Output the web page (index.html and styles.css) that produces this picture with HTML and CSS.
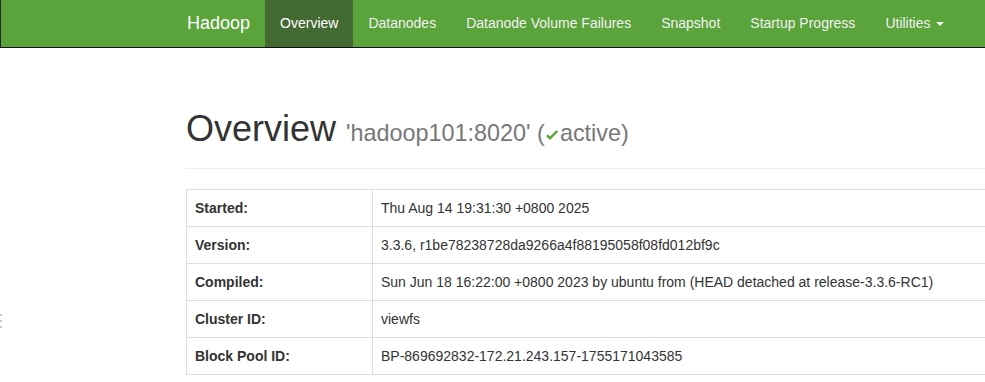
FILE: index.html
```html
<!DOCTYPE html>
<html>
<head>
<meta charset="utf-8">
<title>Namenode information</title>
<link rel="stylesheet" href="styles.css">
</head>
<body>
<header class="navbar">
  <div class="container nav-inner">
    <a class="brand">Hadoop</a>
    <ul class="nav">
      <li class="active"><a>Overview</a></li>
      <li><a>Datanodes</a></li>
      <li><a>Datanode Volume Failures</a></li>
      <li><a>Snapshot</a></li>
      <li><a>Startup Progress</a></li>
      <li><a>Utilities <span class="caret"></span></a></li>
    </ul>
  </div>
</header>
<main class="container main">
  <div class="page-header">
    <h1>Overview <small>'hadoop101:8020' (<svg class="ok" viewBox="0 0 14 12" width="14" height="11"><path d="M0.6 6.6 L4.8 10.8 L13.6 2 L11.7 0.2 L4.8 7.1 L2.5 4.8 Z" fill="#55a235"/></svg>active)</small></h1>
  </div>
  <table class="info">
    <tr><th>Started:</th><td>Thu Aug 14 19:31:30 +0800 2025</td></tr>
    <tr><th>Version:</th><td>3.3.6, r1be78238728da9266a4f88195058f08fd012bf9c</td></tr>
    <tr><th>Compiled:</th><td>Sun Jun 18 16:22:00 +0800 2023 by ubuntu from (HEAD detached at release-3.3.6-RC1)</td></tr>
    <tr><th>Cluster ID:</th><td>viewfs</td></tr>
    <tr><th>Block Pool ID:</th><td>BP-869692832-172.21.243.157-1755171043585</td></tr>
  </table>
</main>
<div class="handle"><i></i><i></i><i></i></div>
</body>
</html>
```
FILE: styles.css
```css
html, body {
  margin: 0;
  padding: 0;
  overflow: hidden;
  background: #fff;
}
body {
  font-family: "Liberation Sans", Arial, Helvetica, sans-serif;
  font-size: 14px;
  line-height: 20px;
  color: #333;
  width: 1512px;
}
.container {
  width: 1140px;
  margin-left: 171px;
  padding: 0 15px;
}
.main {
  padding-top: 19px;
}
.navbar {
  background: #5ba33b;
  border-left: 1px solid #1e2a2a;
  border-bottom: 1px solid #111;
  height: 47px;
}
.nav-inner {
  display: flex;
  height: 47px;
  padding-left: 0;
  margin-left: 171px;
}
.brand {
  font-size: 18px;
  color: #fff;
  line-height: 47px;
  padding: 0 15px;
}
.nav {
  display: flex;
  list-style: none;
  margin: 0;
  padding: 0;
}
.nav li a {
  display: block;
  line-height: 47px;
  padding: 0 15px;
  color: #f2f2f2;
}
.nav li.active a {
  background: #446a33;
  color: #fff;
}
.caret {
  display: inline-block;
  width: 0;
  height: 0;
  margin-left: 2px;
  vertical-align: middle;
  border-top: 4px solid #f2f2f2;
  border-left: 4px solid transparent;
  border-right: 4px solid transparent;
}
.page-header {
  margin: 40px 0 20px;
  padding-bottom: 9px;
  border-bottom: 1px solid #eee;
}
h1 {
  margin: 20px 0 10px;
  font-size: 36px;
  font-weight: 500;
  line-height: 1.1;
  color: #333;
  padding-top: 2px;
}
h1 small {
  font-size: 65%;
  color: #777;
  font-weight: 400;
  line-height: 1;
}
.ok {
  display: inline-block;
  vertical-align: baseline;
  margin: 0 1px 0 0;
}
.info {
  width: 100%;
  border-collapse: collapse;
  border: 1px solid #ddd;
}
.info th, .info td {
  border: 1px solid #ddd;
  padding: 8px;
  line-height: 20px;
  text-align: left;
  vertical-align: top;
}
.info th {
  width: 169px;
  font-weight: bold;
}
.handle {
  position: absolute;
  left: 0;
  top: 314px;
  display: flex;
  flex-direction: column;
  gap: 4px;
}
.handle i {
  display: block;
  width: 2px;
  height: 2px;
  background: #c8c8c8;
}
```
